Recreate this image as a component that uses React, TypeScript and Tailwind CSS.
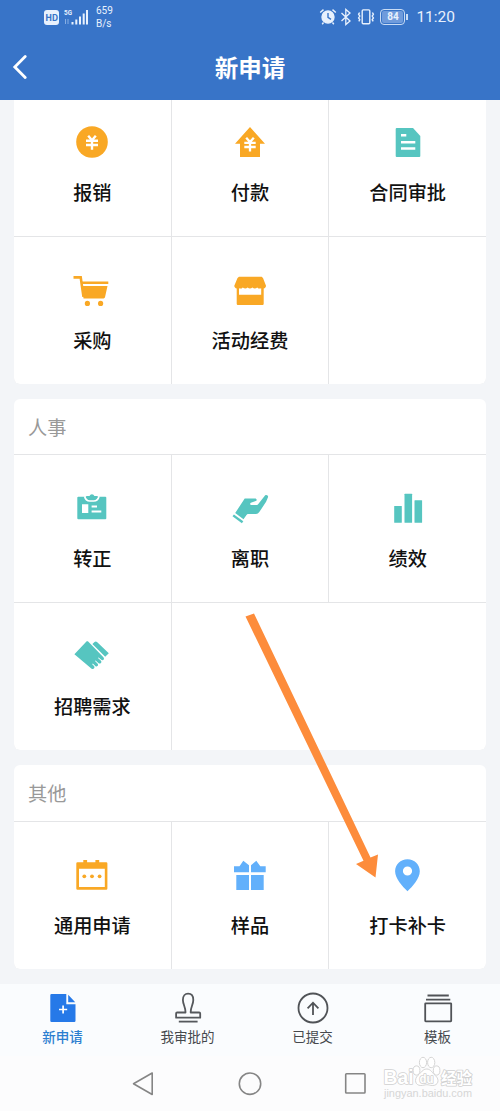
import React from 'react';

interface AppItem {
  label: string;
  icon: React.ReactNode;
}

const ORANGE = '#f9a825';
const TEAL = '#56c5c0';
const BLUE = '#62b0fb';

const Icon = ({ color, children }: { color: string; children: React.ReactNode }) => (
  <svg viewBox="0 0 40 40" fill={color} className="w-10 h-10 shrink-0">
    {children}
  </svg>
);

const financeItems: AppItem[] = [
  {
    label: '报销',
    icon: (
      <Icon color={ORANGE}>
        <circle cx="20" cy="19" r="15.8" />
        <path d="M16.2 12.7 20 17.2l3.8-4.5M14 17.8h12M14 22h12M20 17v9.8" fill="none" stroke="#fff" strokeWidth="2.4" />
      </Icon>
    ),
  },
  {
    label: '付款',
    icon: (
      <Icon color={ORANGE}>
        <path d="M20 4 35 20.7h-5V34H10V20.7H5z" />
        <path d="M16.2 14.7 20 19l3.8-4.3M14.3 19.8h11.4M14.3 24h11.4M20 19v9.6" fill="none" stroke="#fff" strokeWidth="2.3" />
      </Icon>
    ),
  },
  {
    label: '合同审批',
    icon: (
      <Icon color={TEAL}>
        <path d="M8.700 5H25l7.300 8v20a1 1 0 0 1-1 1H8.700a1 1 0 0 1-1-1V6a1 1 0 0 1 1-1z" />
        <path d="M13 12.200h5.300M13 19.200h14.300M13 25.500h14.300" stroke="#fff" strokeWidth="2.600" />
      </Icon>
    ),
  },
  {
    label: '采购',
    icon: (
      <Icon color={ORANGE}>
        <path d="M1.5 6.4h7.2l2.8 19.5" fill="none" stroke={ORANGE} strokeWidth="2.6" />
        <path d="M9 10.4h27.3v2.6H9zM10 15h25.5L33 26.3a1.5 1.5 0 0 1-1.5 1.1H11.5z" />
        <circle cx="15.4" cy="32.4" r="2.6" />
        <circle cx="28.6" cy="32.4" r="2.6" />
      </Icon>
    ),
  },
  {
    label: '活动经费',
    icon: (
      <Icon color={ORANGE}>
        <path d="M9 5.7h22.7l1.3 1.2 3 7.8c0 1.6-1 2.4-2.3 2.8v15.3a1.2 1.2 0 0 1-1.2 1.2H7.9a1.2 1.2 0 0 1-1.2-1.2V17.5c-1.3-.4-2.4-1.2-2.4-2.8l3.2-7.8z" />
        <path d="M9 17.3c1.3.6 2.8.3 3.8-.9 1.6 1.5 3.4 1.5 4.8 0 1.5 1.5 3.3 1.5 4.8 0 1.5 1.5 3.3 1.5 4.8 0 1.2 1.2 2.6 1.5 4 .9v6.4H9z" fill="#fff" />
      </Icon>
    ),
  },
];

const hrItems: AppItem[] = [
  {
    label: '转正',
    icon: (
      <Icon color={TEAL}>
        <rect x="5.3" y="7.7" width="29" height="22.5" rx="1" />
        <path d="M12.600 7.200c.8 3.500 2.800 4.800 5.200 4.800h4c2.400 0 4.400-1.300 5.200-4.800" fill="none" stroke="#fff" strokeWidth="1.700" />
        <path d="M14 6.900h3.500a2.600 2.600 0 0 1 4.900 0h3.400c-.6 2.400-1.900 3.300-3.600 3.300h-4.600c-1.700 0-3-.9-3.600-3.300z" />
        <path d="M10 15.2h6.300V24H10z" fill="#fff" />
        <path d="M19.6 17.500H25M19.600 22.500h9.700" stroke="#fff" strokeWidth="1.900" />
      </Icon>
    ),
  },
  {
    label: '离职',
    icon: (
      <Icon color={TEAL}>
        <path d="M14.7 9.600H25c1.800 0 2.200 1.900.8 2.400l-5 1.700c-1 .5-.8 2.200.4 2.400h4.700c1 0 1.800-.4 2.400-1.200l6.700-8.400c1.500-1.300 3.600.1 3 1.800l-1.900 4.500-6.800 10.300c-1 1.300-1.800 1.900-3.300 1.900h-7.500c-1 0-1.600.4-2.200 1.200l-2.800 4-8.300-6.200z" />
        <path d="m3.200 26.400 9.400 6.900" stroke={TEAL} strokeWidth="2.400" />
      </Icon>
    ),
  },
  {
    label: '绩效',
    icon: (
      <Icon color={TEAL}>
        <rect x="6.200" y="17" width="7.600" height="16.700" rx=".5" />
        <rect x="16.500" y="4.700" width="7.600" height="29" rx=".5" />
        <rect x="26.500" y="11.300" width="7.600" height="22.400" rx=".5" />
      </Icon>
    ),
  },
  {
    label: '招聘需求',
    icon: (
      <Icon color={TEAL}>
        <path d="M14.200 4.700c.6-.6 1.600-.6 2.200 0l15 15.500c1.700 2-.6 3.900-2.400 2.400l-2.400-2.200-.6.600 2.700 2.600c1.900 1.800-.5 4-2.300 2.500l-2.800-2.600-.6.600 2.500 2.500c1.700 1.700-.5 3.800-2.200 2.300l-2.500-2.300-.6.600 1.800 1.800c1.600 1.900-.9 3.900-2.700 2.400L2.400 17.200z" />
        <path d="M22.500 5c.8-.8 1.700-.8 2.500-.1l11.800 11.300-3.600 3.500L20.400 7.100z" />
      </Icon>
    ),
  },
];

const otherItems: AppItem[] = [
  {
    label: '通用申请',
    icon: (
      <Icon color={ORANGE}>
        <path d="M11.300 4h3.800v4h-3.800zM23.400 4h3.800v4h-3.800z" />
        <path fillRule="evenodd" d="M5.500 6.300h28.700a1.200 1.200 0 0 1 1.200 1.200v25a1.200 1.200 0 0 1-1.200 1.200H5.500a1.200 1.200 0 0 1-1.200-1.200v-25a1.200 1.200 0 0 1 1.200-1.200zM7 12.700v18.400h25.800V12.700z" />
        <circle cx="12.300" cy="20.300" r="1.900" />
        <circle cx="20" cy="20.300" r="1.900" />
        <circle cx="27.600" cy="20.300" r="1.900" />
      </Icon>
    ),
  },
  {
    label: '样品',
    icon: (
      <Icon color={BLUE}>
        <path d="M4 10.300h5.500l3.800-5.600 5.700 4.500v7.100H4zM35.700 10.300h-5.400l-4-5.600-5.300 4.500v7.100h14.700zM6.300 19H19v15H6.300zM21 19h12.700v15H21z" />
      </Icon>
    ),
  },
  {
    label: '打卡补卡',
    icon: (
      <Icon color={BLUE}>
        <path fillRule="evenodd" d="M19.500 3.300c7 0 12.300 5.300 12.300 12 0 7.500-7.400 15.200-12.300 20C14.600 30.500 7.100 22.800 7.100 15.300c0-6.700 5.400-12 12.400-12zm0 7.100a4.600 4.600 0 1 0 0 9.200 4.600 4.600 0 0 0 0-9.200z" />
      </Icon>
    ),
  },
];

const tabs = [
  {
    label: '新申请',
    active: true,
    icon: (
      <svg viewBox="0 0 32 32" className="w-8 h-8">
        <path d="M4.500 2h14.800v10.200h9.200v16.600a1.200 1.200 0 0 1-1.200 1.200H4.500a1.200 1.200 0 0 1-1.200-1.200V3.200A1.200 1.200 0 0 1 4.500 2zM21.200 2.700l7 7.600h-7z" fill="#2679e8" />
        <path d="M12 17.500h8.200M16.100 13.400v8.200" stroke="#fff" strokeWidth="1.700" />
      </svg>
    ),
  },
  {
    label: '我审批的',
    active: false,
    icon: (
      <svg viewBox="0 0 32 32" className="w-8 h-8" fill="none" stroke="#55585c" strokeWidth="1.800">
        <path d="M13.500 20.500c.3-5-2.600-8-2.600-12.600 0-4 2.100-6.300 5.200-6.300s5.200 2.300 5.200 6.300c0 4.600-2.900 7.600-2.600 12.600h8.500a1 1 0 0 1 1 1v4.200H4.100v-4.200a1 1 0 0 1 1-1z" strokeLinejoin="round" />
        <path d="M6.800 29.600h18.800" />
      </svg>
    ),
  },
  {
    label: '已提交',
    active: false,
    icon: (
      <svg viewBox="0 0 32 32" className="w-8 h-8" fill="none" stroke="#505357" strokeWidth="1.800">
        <circle cx="16" cy="16" r="14.500" />
        <path d="M16 23V10.800M10.600 16.300 16 10.700l5.400 5.600" />
      </svg>
    ),
  },
  {
    label: '模板',
    active: false,
    icon: (
      <svg viewBox="0 0 32 32" className="w-8 h-8" fill="none" stroke="#505357" strokeWidth="1.800">
        <rect x="3.200" y="11.300" width="26" height="18" rx=".5" />
        <path d="M5.500 3.500h21.300M4 7.700h24.300" />
      </svg>
    ),
  },
];

function StatusBar() {
  return (
    <div className="flex items-center h-[34px] pl-11 pr-[45px] text-[#e8f1fd]">
      <div className="flex items-center justify-center w-[15px] h-[15px] rounded-[3px] bg-[#e8f1fd] text-[#3874c8] text-[9px] font-bold leading-none tracking-tighter">
        HD
      </div>
      <svg viewBox="0 0 26 18" className="w-[26px] h-[18px] ml-1" fill="#e8f1fd">
        <text x="1" y="7" fontSize="8" fontWeight="700" textLength="8" lengthAdjust="spacingAndGlyphs" fontFamily="Roboto, sans-serif">5G</text>
        <path d="M2.500 11v5M5 11v5" stroke="#86aee3" />
        <path d="M8.500 14h2v2.500h-2zM12.300 11.500h2v5h-2zM16 8.500h2v8h-2zM19.700 5.500h2v11h-2zM23 2h2v14.500h-2z" />
      </svg>
      <div className="ml-[7px] text-[10px] leading-[13px] font-[Roboto,sans-serif]">
        <div>659</div>
        <div>B/s</div>
      </div>
      <div className="flex items-center ml-auto">
        <svg viewBox="0 0 18 18" className="w-[18px] h-[18px]" fill="none" stroke="#e8f1fd" strokeWidth="1.400">
          <circle cx="9" cy="9" r="6" fill="#e8f1fd" />
          <path d="M1.200 4.500 4.500 1.600M16.800 4.500l-3.300-2.900M4.500 14.500l-1.300 1.700M13.500 14.500l1.300 1.700" />
          <path d="M9 5v4.300l3 2" stroke="#3874c8" />
        </svg>
        <svg viewBox="0 0 12 18" className="w-3 h-[18px] ml-[3px]" fill="none" stroke="#e8f1fd" strokeWidth="1.300">
          <path d="m1.500 5 8.500 8-4.200 3.500v-15L10 5l-8.500 8" />
        </svg>
        <svg viewBox="0 0 20 18" className="w-5 h-[18px] ml-1" fill="none" stroke="#e8f1fd" strokeWidth="1.400">
          <rect x="6.200" y="1.900" width="7.600" height="13.800" rx="1" />
          <path d="m3.600 4.500-1 1.800 1.200 1.800-1.200 1.800 1.200 1.800-1 1.700M16.400 4.500l1 1.800-1.200 1.800 1.200 1.800-1.200 1.800 1 1.700" />
        </svg>
        <div className="flex items-center justify-center w-[25px] h-4 ml-1 border-[1.500px] border-[#c9dcf5] rounded-[4px] p-px">
          <div className="w-full h-full rounded-[2px] bg-[#6f9bdc] text-[10px] leading-[12px] text-center font-bold font-[Roboto,sans-serif]">84</div>
        </div>
        <div className="w-0.5 h-1.5 ml-px bg-[#c9dcf5]" />
        <div className="ml-2 text-[15.500px] leading-5 font-[Roboto,sans-serif]">11:20</div>
      </div>
    </div>
  );
}

function Cell({ item, clipped }: { item?: AppItem; clipped?: boolean }) {
  return (
    <div
      className={`flex flex-col items-center justify-end pb-[30px] bg-white ${clipped ? 'h-[136px]' : 'h-[147px]'}`}
    >
      {item && (
        <>
          {item.icon}
          <span className="mt-[15px] text-[19.200px] leading-7 font-medium text-[#111]">{item.label}</span>
        </>
      )}
    </div>
  );
}

function SectionTitle({ children }: { children: React.ReactNode }) {
  return (
    <h2 className="grow pl-3.5 pt-[1px] leading-[54px] text-[19.200px] text-[#999] bg-white border-b border-[#e4e5e7]">{children}</h2>
  );
}

function Watermark() {
  return (
    <svg viewBox="0 0 92 46" className="absolute left-[382px] top-[1055px] w-[92px] h-[46px]" fill="#fff" stroke="#d0d0d0" strokeWidth="1.600" strokeLinejoin="round">
      <text x="1.500" y="29" fontSize="20.500" fontWeight="700" textLength="30" lengthAdjust="spacingAndGlyphs" fontFamily="Liberation Sans, sans-serif" paintOrder="stroke">Bai</text>
      <g strokeWidth=".9">
        <ellipse cx="34.500" cy="15.500" rx="3.400" ry="4.600" />
        <ellipse cx="41" cy="7.500" rx="3.600" ry="5.200" />
        <ellipse cx="49.200" cy="7.500" rx="3.600" ry="5.200" />
        <ellipse cx="54.600" cy="15.500" rx="3.300" ry="4.600" />
        <path d="M44.800 14c4 0 5.500 4 8.500 6.500 5 4.500 2.500 10-2.500 10-3 0-4-.8-6-.8s-3.500.8-6 .8c-5.500 0-7-6-3-10 3.500-3 5-6.500 9-6.500z" />
      </g>
      <text x="37.500" y="27.500" fontSize="12" fontWeight="700" textLength="14" lengthAdjust="spacingAndGlyphs" fontFamily="Liberation Sans, sans-serif" paintOrder="stroke">du</text>
      <text x="59" y="28.500" fontSize="15.500" fontWeight="700" fontFamily="Noto Sans CJK SC, sans-serif" paintOrder="stroke">经验</text>
      <text x="2" y="42" fontSize="10.500" textLength="88" lengthAdjust="spacingAndGlyphs" fill="#d6d6d6" stroke="none" fontFamily="Liberation Sans, sans-serif">jingyan.baidu.com</text>
    </svg>
  );
}

export default function App() {
  return (
    <div className="relative flex flex-col w-[500px] h-[1111px] overflow-hidden bg-[#f3f5f8] font-['Noto_Sans_CJK_SC',sans-serif]">
      <header className="h-[100px] shrink-0 bg-[#3874c8]">
        <StatusBar />
        <div className="grid grid-cols-[60px_1fr_60px] items-center h-[66px]">
          <button className="pl-3" aria-label="返回">
            <svg viewBox="0 0 16 24" className="w-4 h-6" fill="none" stroke="#fff" strokeWidth="2.800">
              <path d="M13.200 1.500 2.800 12l10.400 10.500" strokeLinecap="round" />
            </svg>
          </button>
          <h1 className="text-center text-[23.500px] leading-8 font-bold text-white">新申请</h1>
        </div>
      </header>

      <main className="flex flex-col gap-[15px] h-[884px] shrink-0 px-3.5">
        <section className="h-[284px] shrink-0 overflow-hidden rounded-b-md">
          <div className="grid grid-cols-3 gap-px bg-[#e4e5e7]">
            {financeItems.map((item, i) => (
              <Cell key={item.label} item={item} clipped={i < 3} />
            ))}
            <Cell />
          </div>
        </section>

        <section className="flex flex-col h-[351px] shrink-0 overflow-hidden rounded-md">
          <SectionTitle>人事</SectionTitle>
          <div className="grid grid-cols-3 gap-px bg-[#e4e5e7]">
            {hrItems.map((item) => (
              <Cell key={item.label} item={item} />
            ))}
            <div className="col-span-2 bg-white" />
          </div>
        </section>

        <section className="flex flex-col h-[204px] shrink-0 overflow-hidden rounded-md">
          <SectionTitle>其他</SectionTitle>
          <div className="grid grid-cols-3 gap-px bg-[#e4e5e7]">
            {otherItems.map((item) => (
              <Cell key={item.label} item={item} />
            ))}
          </div>
        </section>
      </main>

      <nav className="grid grid-cols-4 h-[72px] shrink-0 pt-2 bg-[#fafcfe]">
        {tabs.map((tab) => (
          <button key={tab.label} className="flex flex-col items-center">
            {tab.icon}
            <span className={`mt-0.5 text-[13.500px] leading-5 ${tab.active ? 'text-[#2b7ed0] font-medium' : 'text-[#45484c]'}`}>
              {tab.label}
            </span>
          </button>
        ))}
      </nav>

      {/* barre de navigation système */}
      <div className="flex items-center justify-center gap-[82px] h-[55px] shrink-0 bg-[#fcfcfd]">
        <svg viewBox="0 0 24 24" className="w-6 h-6" fill="none" stroke="#858585" strokeWidth="1.600" strokeLinejoin="round">
          <path d="M20.200 1v21.500L1.500 11.800z" />
        </svg>
        <svg viewBox="0 0 24 24" className="w-6 h-6" fill="none" stroke="#858585" strokeWidth="1.600">
          <circle cx="12" cy="11.700" r="10.700" />
        </svg>
        <svg viewBox="0 0 24 24" className="w-6 h-6" fill="none" stroke="#858585" strokeWidth="1.600">
          <rect x="1.700" y="1.700" width="19.300" height="19.300" rx=".8" />
        </svg>
      </div>

      <svg viewBox="0 0 140 270" className="absolute left-[243px] top-[611px] w-[140px] h-[270px] pointer-events-none">
        <path d="M2.500 5.500 11 2.500 127.500 246.500l7.500-3-2.500 23-19.500-13.500 7.500-3.200z" fill="#fd8c3b" />
      </svg>

      <Watermark />
    </div>
  );
}
